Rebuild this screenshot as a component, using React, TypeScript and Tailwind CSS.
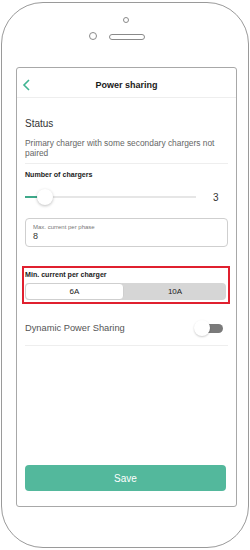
export default function App() {
  return (
    <div className="w-[250px] h-[550px] bg-white pt-[2px] pl-[1px]" style={{ fontFamily: '"Liberation Sans", Arial, sans-serif' }}>
      <div className="w-[248px] h-[546px] rounded-[42px] border border-[#9a9a9a] flex flex-col">
        {/* camera + speaker */}
        <div className="h-[64px] relative">
          <div className="absolute left-[121px] top-[14px] w-[6px] h-[6px] rounded-full border border-[#8a8a8a]" />
          <div className="absolute left-[87px] top-[29px] w-[8px] h-[8px] rounded-full border border-[#8a8a8a]" />
          <div className="absolute left-[107px] top-[31px] w-[36px] h-[6px] rounded-full border border-[#8a8a8a]" />
        </div>

        {/* screen */}
        <div className="ml-[14px] w-[221px] h-[440px] border border-[#a8a8a8] rounded-[3px] flex flex-col">
          <div className="h-[30px] border-b border-[#eeeeee] flex items-end pb-[4px] relative">
            <svg className="absolute left-[5px] top-[11px]" width="9" height="12" viewBox="0 0 9 12">
              <polyline points="7,1 2,6 7,11" fill="none" stroke="#3fb592" strokeWidth="1.6" />
            </svg>
            <div className="w-full text-center text-[9px] leading-[16px] font-semibold text-[#1a1a1a]">Power sharing</div>
          </div>

          <div className="px-[8px] flex-1 flex flex-col">
            <div className="mt-[19px] text-[10px] leading-[14px] text-[#333]">Status</div>
            <div className="mt-[7px] text-[8.4px] leading-[10px] text-[#666] pb-[5px] border-b border-[#eeeeee]">
              Primary charger with some secondary chargers not paired
            </div>

            <div className="mt-[6px] text-[7.1px] leading-[10px] font-bold text-[#222]">Number of chargers</div>
            <div className="mt-[9px] h-[16px] flex items-center">
              <div className="w-[171px] h-[2px] bg-[#e6e6e6] relative">
                <div className="absolute left-0 top-0 h-[2px] w-[14px] bg-[#3fa98a]" />
                <div className="absolute left-[12px] top-[-7px] w-[16px] h-[16px] rounded-full bg-white shadow-[0_1px_3px_rgba(0,0,0,0.25)]" />
              </div>
              <div className="ml-[17px] text-[10px] text-[#333]">3</div>
            </div>

            <div className="mt-[13px] h-[29px] border border-[#cfcfcf] rounded-[4px] pl-[7px] pt-[4px]">
              <div className="text-[6px] leading-[8px] text-[#777]">Max. current per phase</div>
              <div className="text-[9px] leading-[11px] text-[#333]">8</div>
            </div>

            <div className="mt-[19px] -ml-[3px] w-[208px] border-2 border-[#e0202f] pl-[1px] pr-[2px] pt-[3px] pb-[2px]">
              <div className="text-[7.1px] leading-[9px] font-bold text-[#222]">Min. current per charger</div>
              <div className="mt-[3px] h-[17px] rounded-[4px] bg-[#d6d6d6] flex">
                <div className="w-[99px] h-[17px] rounded-[4px] bg-white border border-[#cfcfcf] flex items-center justify-center text-[8px] text-[#222]">6A</div>
                <div className="flex-1 flex items-center justify-center text-[8px] text-[#222]">10A</div>
              </div>
            </div>

            <div className="mt-[17px] pb-[10px] border-b border-[#eeeeee] flex items-center justify-between">
              <div className="text-[9.3px] leading-[14px] text-[#555]">Dynamic Power Sharing</div>
              <div className="mr-[5px] w-[29px] h-[14px] relative">
                <div className="absolute right-0 top-[3px] w-[16px] h-[9px] rounded-r-full bg-[#7a7a7a]" />
                <div className="absolute left-0 top-[-1px] w-[16px] h-[16px] rounded-full bg-white shadow-[0_1px_2px_rgba(0,0,0,0.2)]" />
              </div>
            </div>

            <div className="mt-auto mb-[15px] h-[26px] w-[201px] rounded-[4px] bg-[#53b89c] flex items-center justify-center text-[10px] font-medium text-white">
              Save
            </div>
          </div>
        </div>
      </div>
    </div>
  );
}
